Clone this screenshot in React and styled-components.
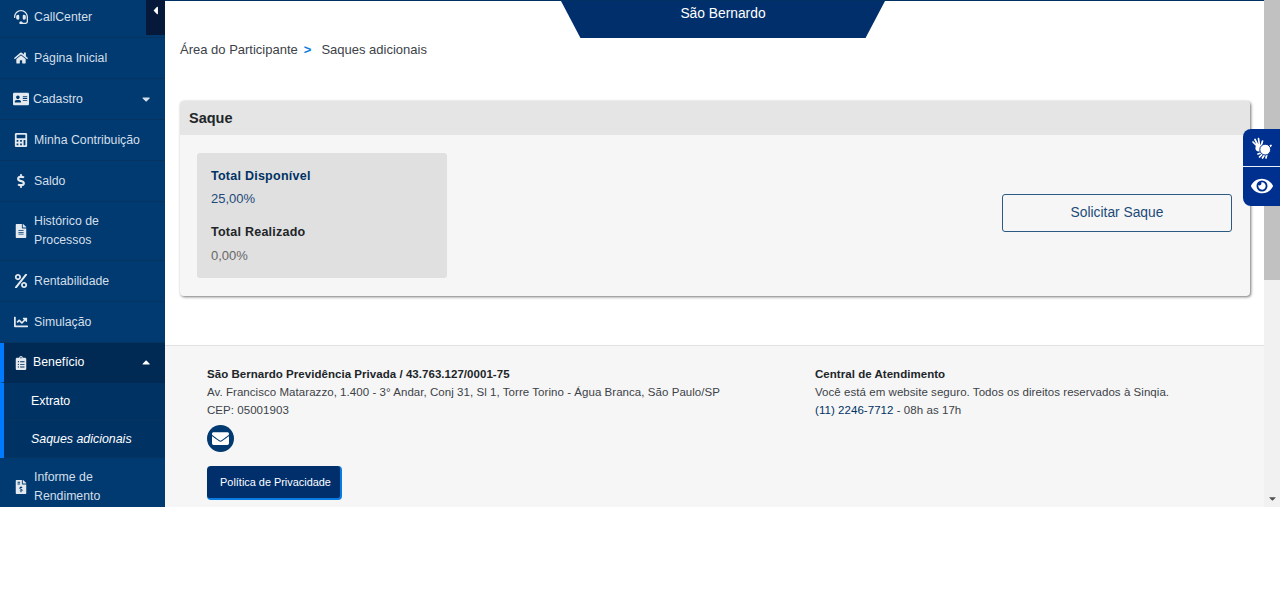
import React from "react";
import styled, { createGlobalStyle } from "styled-components";
import {
  FaHeadset,
  FaHome,
  FaAddressCard,
  FaCalculator,
  FaDollarSign,
  FaFileAlt,
  FaPercent,
  FaChartLine,
  FaClipboardList,
  FaFileInvoiceDollar,
  FaCaretDown,
  FaCaretUp,
  FaCaretLeft,
  FaEye,
  FaEnvelope
} from "react-icons/fa";

const GlobalStyle = createGlobalStyle`
  html, body {
    margin: 0;
    background: #fff;
    font-family: "Liberation Sans", Arial, sans-serif;
  }
`;

const Shell = styled.div`
  display: flex;
  height: 507px;
  overflow: hidden;
  position: relative;
`;

const Sidebar = styled.nav`
  background: #003a70;
  flex: 0 0 165px;
  overflow: hidden;
  position: relative;
`;

const MenuList = styled.div`
  display: flex;
  flex-direction: column;
  margin-top: -3px;
`;

const MenuRow = styled.div`
  align-items: center;
  background: ${props => (props.active ? "#002a54" : "transparent")};
  border-bottom: 1px solid ${props => (props.active ? "#002a54" : "#04345f")};
  border-left: ${props => (props.active ? "4px solid #007bff" : "none")};
  box-sizing: border-box;
  color: ${props => (props.active ? "#fff" : "#d4dfe9")};
  display: flex;
  font-size: 12.3px;
  height: ${props => (props.tall ? "59px" : props.active ? "40px" : "41px")};
  line-height: 19px;
  padding-left: ${props => (props.active ? "10px" : "14px")};
  padding-right: 13px;
`;

const MenuIcon = styled.span`
  color: #e3e9ef;
  display: flex;
  flex: 0 0 ${props => (props.active ? "19px" : "20px")};
  font-size: ${props => (props.wide ? "16px" : "14px")};
  margin-left: ${props => (props.wide ? "-1px" : "0")};
`;

const MenuLabel = styled.span`
  flex: 1;
`;

const SubRow = styled.div`
  align-items: center;
  background: #003264;
  border-left: 4px solid #007bff;
  box-shadow: inset 0 -1px #04345f;
  box-sizing: border-box;
  color: #fff;
  display: flex;
  font-size: 12.4px;
  font-style: ${props => (props.current ? "italic" : "normal")};
  height: ${props => (props.current ? "37px" : "38px")};
  padding-bottom: 2px;
  padding-left: 27px;
`;

const CollapseTab = styled.button`
  align-items: center;
  background: #06193a;
  border: none;
  color: #fff;
  display: flex;
  font-size: 13px;
  height: 35px;
  justify-content: center;
  padding: 0 0 14px;
  position: absolute;
  right: 0;
  top: 0;
  width: 19px;
`;

const Main = styled.main`
  border-top: 1px solid #003264;
  flex: 1;
  min-width: 0;
`;

const BannerRow = styled.div`
  display: flex;
  padding-left: 396px;
`;

const Banner = styled.div`
  background: #002f6c;
  clip-path: polygon(0 0, 100% 0, 94% 100%, 6% 100%);
  color: #fff;
  font-size: 13.8px;
  height: 37px;
  line-height: 26px;
  text-align: center;
  width: 324px;
`;

const Breadcrumb = styled.div`
  color: #3c4248;
  display: flex;
  font-size: 13px;
  height: 24px;
  line-height: 23px;
  padding: 0 0 0 15px;
  margin-bottom: 39px;
`;

const CrumbSeparator = styled.span`
  color: #0a7be0;
  font-weight: bold;
  padding: 0 10px 0 6px;
`;

const Card = styled.section`
  background: #f6f6f6;
  border-radius: 4px;
  box-shadow: 1px 1px 3px rgba(0, 0, 0, 0.55);
  margin: 0 14px 49px 15px;
`;

const CardHeader = styled.h2`
  background: #e5e5e5;
  border-radius: 4px 4px 0 0;
  color: #212529;
  font-size: 14.5px;
  height: 34px;
  line-height: 34px;
  margin: 0;
  padding-left: 9px;
`;

const CardBody = styled.div`
  align-items: center;
  display: flex;
  height: 161px;
  justify-content: space-between;
  padding: 0 18px 0 17px;
`;

const TotalsBox = styled.div`
  background: #e0e0e0;
  border-radius: 3px;
  box-sizing: border-box;
  height: 125px;
  padding: 14px 14px;
  width: 250px;
`;

const TotalTitle = styled.div`
  color: ${props => (props.accent ? "#003264" : "#212529")};
  font-size: 12.5px;
  font-weight: bold;
  letter-spacing: 0.25px;
  line-height: 18px;
`;

const TotalValue = styled.div`
  color: ${props => (props.accent ? "#1c4a78" : "#666")};
  font-size: 13px;
  line-height: 20px;
  margin: ${props => (props.accent ? "4px 0 14px" : "5px 0 0")};
`;

const RequestButton = styled.button`
  background: transparent;
  border: 1px solid #2d5a82;
  border-radius: 3px;
  color: #1c4a78;
  font-family: inherit;
  font-size: 13.8px;
  height: 38px;
  margin-bottom: 5px;
  padding: 0 0 2px;
  width: 230px;
`;

const Footer = styled.footer`
  background: #f6f6f6;
  border-top: 1px solid #e2e2e2;
  display: grid;
  font-size: 11.5px;
  grid-template-columns: 608px 1fr;
  height: 170px;
  padding: 19px 0 0 42px;
  color: #3c4248;
  line-height: 18px;
`;

const FooterTitle = styled.div`
  color: #212529;
  font-weight: bold;
  letter-spacing: 0.04px;
`;

const FooterText = styled.div`
  letter-spacing: 0.05px;
`;

const PhoneLink = styled.span`
  color: #003264;
`;

const MailBadge = styled.span`
  align-items: center;
  background: #003a70;
  border-radius: 50%;
  color: #fff;
  display: flex;
  font-size: 17px;
  height: 27px;
  justify-content: center;
  margin: 6px 0 14px;
  width: 27px;
`;

const PrivacyButton = styled.button`
  background: #002f6c;
  border: none;
  border-bottom: 2px solid #0a7be0;
  border-radius: 4px;
  border-right: 2px solid #0a7be0;
  color: #fff;
  display: block;
  font-family: inherit;
  font-size: 10.9px;
  height: 34px;
  padding: 0 0 0 4px;
  width: 135px;
`;

const ScrollTrack = styled.div`
  background: #f1f1f1;
  display: flex;
  flex: 0 0 16px;
  flex-direction: column;
  justify-content: space-between;
`;

const ScrollThumb = styled.div`
  background: #c1c1c1;
  height: 280px;
`;

const ScrollArrow = styled.span`
  color: #505050;
  display: flex;
  font-size: 11px;
  height: 17px;
  justify-content: center;
  align-items: center;
`;

const FloatingTools = styled.div`
  background: #00308f;
  border-radius: 8px 0 0 8px;
  color: #fff;
  display: flex;
  flex-direction: column;
  overflow: hidden;
  position: absolute;
  right: 0;
  top: 129px;
  width: 37px;
`;

const ToolButton = styled.div`
  align-items: center;
  border-bottom: ${props => (props.first ? "1px solid #e8eef5" : "none")};
  box-sizing: border-box;
  display: flex;
  font-size: 22px;
  height: ${props => (props.first ? "38px" : "39px")};
  justify-content: center;
  padding-bottom: ${props => (props.first ? "0" : "1px")};
`;

// sign language hands, no package has this one with the splayed fingers
const SignHands = () => (
  <svg width="20" height="22" viewBox="0 0 20 22">
    <g stroke="#fff" strokeWidth="1.7" strokeLinecap="round" fill="none">
      <path d="M5.5 9.5 1 5M6 8.5 3 2.5M7.5 8.5 6.5 1.5M9 9.5 10.5 4" />
      <path d="M10 15.5 6 17M11 16.5 7.5 20M13 17 10.5 21M15 16.5 14 21M16.5 10.5 19 8.5" />
    </g>
    <circle cx="6.8" cy="11" r="3.4" fill="#fff" />
    <circle cx="13.2" cy="12.6" r="5.4" fill="#fff" stroke="#00308f" strokeWidth="1" />
  </svg>
);

const menuTop = [
  { label: "CallCenter", icon: <FaHeadset /> },
  { label: "Página Inicial", icon: <FaHome /> },
  { label: "Cadastro", icon: <FaAddressCard />, caret: true, wide: true },
  { label: "Minha Contribuição", icon: <FaCalculator /> },
  { label: "Saldo", icon: <FaDollarSign /> },
  { label: "Histórico de Processos", icon: <FaFileAlt />, tall: true },
  { label: "Rentabilidade", icon: <FaPercent /> },
  { label: "Simulação", icon: <FaChartLine /> }
];

const App = () => (
  <Shell>
    <GlobalStyle />
    <Sidebar>
      <MenuList>
        {menuTop.map(({ label, icon, caret, tall, wide }) => (
          <MenuRow key={label} tall={tall}>
            <MenuIcon wide={wide}>{icon}</MenuIcon>
            <MenuLabel>{label}</MenuLabel>
            {caret && <FaCaretDown />}
          </MenuRow>
        ))}
        <MenuRow active>
          <MenuIcon active>
            <FaClipboardList />
          </MenuIcon>
          <MenuLabel>Benefício</MenuLabel>
          <FaCaretUp />
        </MenuRow>
        <SubRow>Extrato</SubRow>
        <SubRow current>Saques adicionais</SubRow>
        <MenuRow tall>
          <MenuIcon>
            <FaFileInvoiceDollar />
          </MenuIcon>
          <MenuLabel>Informe de Rendimento</MenuLabel>
        </MenuRow>
      </MenuList>
      <CollapseTab>
        <FaCaretLeft />
      </CollapseTab>
    </Sidebar>
    <Main>
      <BannerRow>
        <Banner>São Bernardo</Banner>
      </BannerRow>
      <Breadcrumb>
        Área do Participante
        <CrumbSeparator>&gt;</CrumbSeparator>
        Saques adicionais
      </Breadcrumb>
      <Card>
        <CardHeader>Saque</CardHeader>
        <CardBody>
          <TotalsBox>
            <TotalTitle accent>Total Disponível</TotalTitle>
            <TotalValue accent>25,00%</TotalValue>
            <TotalTitle>Total Realizado</TotalTitle>
            <TotalValue>0,00%</TotalValue>
          </TotalsBox>
          <RequestButton>Solicitar Saque</RequestButton>
        </CardBody>
      </Card>
      <Footer>
        <div>
          <FooterTitle>São Bernardo Previdência Privada / 43.763.127/0001-75</FooterTitle>
          <FooterText>
            Av. Francisco Matarazzo, 1.400 - 3° Andar, Conj 31, Sl 1, Torre Torino - Água Branca, São Paulo/SP
          </FooterText>
          <FooterText>CEP: 05001903</FooterText>
          <MailBadge>
            <FaEnvelope />
          </MailBadge>
          <PrivacyButton>Política de Privacidade</PrivacyButton>
        </div>
        <div>
          <FooterTitle>Central de Atendimento</FooterTitle>
          <FooterText>Você está em website seguro. Todos os direitos reservados à Sinqia.</FooterText>
          <FooterText>
            <PhoneLink>(11) 2246-7712</PhoneLink> - 08h as 17h
          </FooterText>
        </div>
      </Footer>
    </Main>
    <ScrollTrack>
      <ScrollThumb />
      <ScrollArrow>
        <FaCaretDown />
      </ScrollArrow>
    </ScrollTrack>
    <FloatingTools>
      <ToolButton first>
        <SignHands />
      </ToolButton>
      <ToolButton>
        <FaEye />
      </ToolButton>
    </FloatingTools>
  </Shell>
);

export default App;
